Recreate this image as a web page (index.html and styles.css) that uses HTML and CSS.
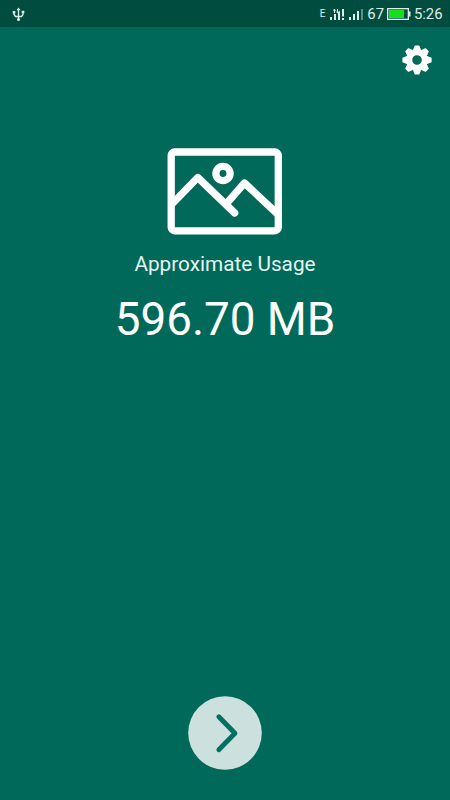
FILE: index.html
```
<!DOCTYPE html>
<html lang="en">
<head>
<meta charset="utf-8">
<title>Approximate Usage</title>
<link rel="stylesheet" href="styles.css">
</head>
<body>
<div class="screen">
  <header class="status">
    <svg class="usb" width="13" height="15" viewBox="0 0 13 15">
      <path d="M6.5 2v11M2 5v2.500l1.500 2h6l1.500-2V5" fill="none" stroke="currentColor" stroke-width="1.300"/>
      <path d="M4.500 3.300 6.500 .500l2 2.800zM.7 4h2.600v2.400H.7zM9.700 3.800h2.600v2.400H9.700z" fill="currentColor"/>
      <circle cx="6.500" cy="12.600" r="1.500" fill="currentColor"/>
    </svg>
    <span class="net">E</span>
    <svg class="sim1" width="15" height="13" viewBox="0 0 15 13">
      <path d="M0 9h2v3H0zM4 6h2v6H4zM8 4h2v8H8zM12 1h2v7.500h-2zM12 10h2v2h-2z" fill="currentColor"/>
      <path d="M4.500 1v4M3.300 2.700l1.200-1.500 1.200 1.500M7.500 1v4M6.300 3.500l1.200 1.400 2.500-2" fill="none" stroke="currentColor"/>
    </svg>
    <svg class="sim2" width="15" height="13" viewBox="0 0 15 13">
      <path d="M0 9h2v3H0zM4 6h2v6H4zM8 3h2v9H8z" fill="currentColor"/>
      <path d="M12 1h2v11h-2z" fill="currentColor" opacity=".4"/>
    </svg>
    <span class="percent">67</span>
    <svg class="battery" width="24" height="12" viewBox="0 0 24 12">
      <rect x=".65" y=".65" width="20.700" height="10.700" fill="none" stroke="currentColor" stroke-width="1.300"/>
      <path d="M22 3.500h1.500v5H22z" fill="currentColor"/>
      <path class="charge" d="M2 2h15v8H2z"/>
    </svg>
    <span class="time">5:26</span>
  </header>
  <div class="toolbar">
    <svg width="30" height="30" viewBox="-15 -15 30 30">
      <defs><path id="tooth" d="M-4.200-9.500-2.500-14Q-2.300-14.600-1.700-14.600H1.700Q2.300-14.600 2.500-14L4.200-9.500z"/></defs>
      <g fill="#fff">
        <circle r="7.750" fill="none" stroke="#fff" stroke-width="5.900"/>
        <use href="#tooth"/>
        <use href="#tooth" transform="rotate(45)"/>
        <use href="#tooth" transform="rotate(90)"/>
        <use href="#tooth" transform="rotate(135)"/>
        <use href="#tooth" transform="rotate(180)"/>
        <use href="#tooth" transform="rotate(225)"/>
        <use href="#tooth" transform="rotate(270)"/>
        <use href="#tooth" transform="rotate(315)"/>
      </g>
    </svg>
  </div>
  <main class="usage">
    <svg width="116" height="88" viewBox="0 0 116 88" fill="none" stroke="#fff" stroke-width="7.300">
      <rect x="4.200" y="5" width="107.100" height="78.800" rx="3.500"/>
      <path d="M5 57 30.800 30.500 67.700 66M60 56 77.500 36 110 66.500" stroke-linecap="round" stroke-linejoin="round"/>
      <circle cx="56" cy="26.500" r="7.100"/>
    </svg>
    <p class="label">Approximate Usage</p>
    <p class="amount">596.70 MB</p>
  </main>
  <footer class="next">
    <svg width="74" height="74" viewBox="0 0 74 74">
      <circle cx="37" cy="37" r="36.800" fill="#cce1de"/>
      <path d="M30.800 20.800 47 37.300 30.800 53.800" fill="none" stroke="#007060" stroke-width="4.800" stroke-linecap="round" stroke-linejoin="round"/>
    </svg>
  </footer>
</div>
</body>
</html>
```
FILE: styles.css
```
body { margin: 0; font-family: Roboto, sans-serif; }
svg { display: block; flex: none; }
.screen {
  width: 450px;
  height: 800px;
  display: flex;
  flex-direction: column;
  background: #00695a;
  color: #fff;
  overflow: hidden;
}
.status {
  height: 27px;
  box-sizing: border-box;
  padding: 1px 7.5px 0 12px;
  display: flex;
  align-items: center;
  background: #004d40;
  color: #e0eeea;
  font-size: 14.8px;
  line-height: 26px;
}
.net { margin-left: auto; font-size: 10px; }
.sim1 { margin-left: 5px; }
.sim2 { margin-left: 4px; }
.percent { margin-left: 3px; }
.battery { margin-left: 3px; }
.charge { fill: #16df20; }
.time { margin-left: 3px; }
.toolbar {
  height: 66px;
  padding-right: 18px;
  display: flex;
  align-items: center;
  justify-content: flex-end;
}
.usage {
  flex: 1;
  padding-top: 54px;
  display: flex;
  flex-direction: column;
  align-items: center;
}
.usage p { margin: 0; white-space: nowrap; }
.label {
  padding-top: 16px;
  font-size: 20.75px;
  line-height: 26px;
  color: #e6f5f1;
}
.amount {
  padding-top: 16px;
  font-size: 45.8px;
  line-height: 54px;
}
.next {
  padding-bottom: 30px;
  display: flex;
  justify-content: center;
}
```
